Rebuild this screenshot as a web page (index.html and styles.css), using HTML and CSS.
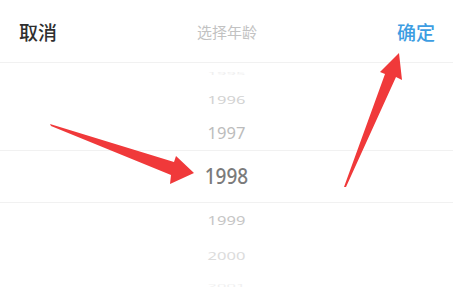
FILE: index.html
```html
<!DOCTYPE html>
<html lang="zh-CN">
<head>
    <meta charset="UTF-8">
    <meta name="viewport" content="width=device-width, initial-scale=1.0">
    <title>选择年龄</title>
    <link rel="stylesheet" href="styles.css">
</head>
<body>
    <div class="sheet">
        <div class="sheet-header">
            <span class="btn-cancel">取消</span>
            <span class="sheet-title">选择年龄</span>
            <span class="btn-ok">确定</span>
        </div>
        <div class="wheel">
            <div class="wheel-row far-up"><span>1995</span></div>
            <div class="wheel-row mid-up"><span>1996</span></div>
            <div class="wheel-row near-up"><span>1997</span></div>
            <div class="wheel-row current"><span>1998</span></div>
            <div class="wheel-row near-down"><span>1999</span></div>
            <div class="wheel-row mid-down"><span>2000</span></div>
            <div class="wheel-row far-down"><span>2001</span></div>
        </div>

        <!-- annotation arrows drawn over the picker -->
        <svg class="marks" width="453" height="287" viewBox="0 0 453 287">
            <polygon points="50,124 174,162 176,156 194,173 170,184 171,175 51,126" fill="#f0393a"/>
            <polygon points="344,187 385,74 380,72 399,53 402,80 396,77 346,187" fill="#f0393a"/>
        </svg>
    </div>
</body>
</html>
```

FILE: styles.css
```css
body {
    margin: 0;
    padding: 0;
    background: #fff;
    font-family: "Noto Sans", "Noto Sans CJK SC", sans-serif;
    overflow: hidden;
}
.sheet {
    position: relative;
    width: 453px;
    height: 287px;
    overflow: hidden;
}
.sheet-header {
    height: 62px;
    display: flex;
    align-items: center;
    justify-content: space-between;
    padding: 0 18px 0 19px;
    border-bottom: 1px solid #f1f1f1;
    font-family: "Noto Sans CJK SC", sans-serif;
}
.btn-cancel {
    font-size: 19px;
    font-weight: 500;
    color: #2f2f2f;
}
.sheet-title {
    font-size: 15px;
    color: #c2c2c2;
}
.btn-ok {
    font-size: 19px;
    font-weight: 500;
    color: #3d9de2;
}
.wheel {
    display: flex;
    flex-direction: column;
}
.wheel-row {
    display: flex;
    align-items: center;
    justify-content: center;
    font-size: 16.5px;
    color: #c4c4c4;
}
.wheel-row span {
    display: block;
    line-height: 1;
}
.far-up {
    height: 21px;
    color: #efefef;
}
.far-up span {
    transform: scaleY(0.25);
}
.mid-up {
    height: 33px;
    color: #d2d2d2;
}
.mid-up span {
    transform: scaleY(0.6);
}
.near-up {
    height: 33px;
    color: #bcbcbc;
}
.near-up span {
    transform: scaleY(0.95);
}
.current {
    height: 51px;
    border-top: 1px solid #f1f1f1;
    border-bottom: 1px solid #f1f1f1;
    font-size: 19px;
    font-weight: 500;
    color: #7b7b7b;
}
.current span {
    transform: scaleY(1.1);
}
.near-down {
    height: 35px;
    color: #c6c6c6;
}
.near-down span {
    transform: scaleY(0.8);
}
.mid-down {
    height: 37px;
    color: #dcdcdc;
}
.mid-down span {
    transform: scaleY(0.6);
}
.far-down {
    height: 22px;
    color: #f0f0f0;
}
.far-down span {
    transform: scaleY(0.3);
}
.marks {
    position: absolute;
    left: 0;
    top: 0;
    pointer-events: none;
}
```
